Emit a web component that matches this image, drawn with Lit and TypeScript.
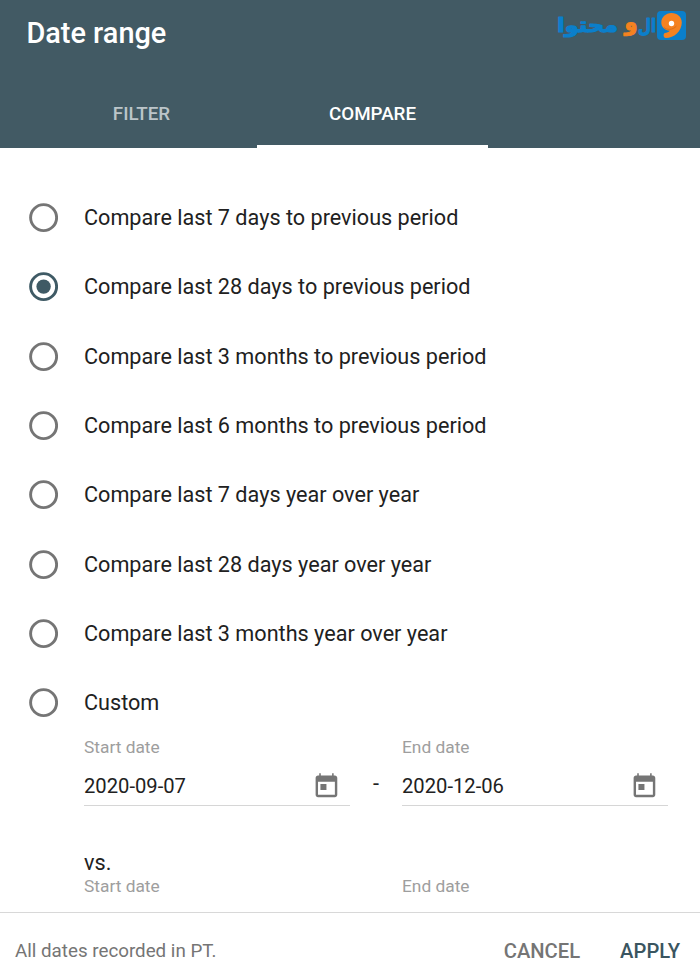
import { LitElement, html, css, svg } from "lit";
import { customElement, property, state } from "lit/decorators.js";
import { classMap } from "lit/directives/class-map.js";

@customElement("brand-logo")
class BrandLogo extends LitElement {
  static styles = css`
    :host { display: block; width: 134px; height: 34px; }
    svg { display: block; }
    text { font-family: "DejaVu Sans", sans-serif; font-weight: 700; stroke-linejoin: round; }
    .blue { fill: #0b7fcb; stroke: #0b7fcb; stroke-width: 1.1; }
    .orange { fill: #f58220; stroke: #f58220; stroke-width: 1; }
  `;
  render() {
    return html`<svg width="134" height="34" viewBox="554 9 134 34">
      <text class="blue" x="557" y="32" font-size="20" textLength="61" lengthAdjust="spacingAndGlyphs">محتوا</text>
      <text class="orange" x="624.500" y="30" font-size="23" textLength="13" lengthAdjust="spacingAndGlyphs">و</text>
      <text class="blue" x="638" y="31.500" font-size="19" textLength="18" lengthAdjust="spacingAndGlyphs">ال</text>
      <rect x="657" y="11" width="29" height="29" rx="4" fill="#0b7fcb" />
      <path fill="#f58220" d="M671.500 13c-5.800 0-10.200 4.300-10.200 9.500 0 4.700 3.700 7.900 8.500 8.200-1.200 1.400-3 2-4.800 2.300-2 .5-1.900 5 .8 5.100 8.300 0 16-7.200 16-15.600 0-5.500-4.500-9.500-10.300-9.500z"/>
      <path fill="none" stroke="#d96f1b" stroke-width="1" d="M664 27.500c2 2.400 8.500 3 12.500-1.500" />
      <circle cx="671.500" cy="23.500" r="2.700" fill="#fff" />
    </svg>`;
  }
}

@customElement("radio-option")
class RadioOption extends LitElement {
  @property() label = "";
  @property({ type: Boolean }) checked = false;
  static styles = css`
    :host { display: flex; align-items: center; height: 69.3px; gap: 26px; cursor: pointer; }
    svg { flex: none; display: block; }
    .ring { fill: none; stroke: #757575; stroke-width: 2.9; }
    .on .ring { stroke: #3f5a65; }
    .dot { fill: #3f5a65; }
    .label { font-size: 21.63px; line-height: 28px; color: #212121; white-space: nowrap; }
  `;
  render() {
    return html`
      <svg class=${classMap({ on: this.checked })} width="30" height="30" viewBox="0 0 30 30">
        <circle class="ring" cx="15.600" cy="14.600" r="13" />
        ${this.checked ? svg`<circle class="dot" cx="15.600" cy="14.600" r="7.200" />` : null}
      </svg>
      <span class="label">${this.label}</span>`;
  }
}

@customElement("date-field")
class DateField extends LitElement {
  @property() label = "";
  @property() value = "";
  static styles = css`
    :host { display: block; width: 266px; }
    .label { font-size: 17.33px; line-height: 20px; color: #9e9e9e; }
    .input { display: flex; align-items: center; justify-content: space-between; height: 36px; padding: 11px 9px 1px 0; border-bottom: 1px solid #d6d6d6; }
    .value { font-size: 20.2px; line-height: 26px; color: #212121; }
    svg { display: block; fill: #757575; }
  `;
  render() {
    return html`
      <div class="label">${this.label}</div>
      ${this.value
        ? html`<div class="input">
            <span class="value">${this.value}</span>
            <svg width="28.900" height="28.900" viewBox="0 0 24 24">
              <path d="M19 3h-1V1h-1.300v2H7.300V1H6v2H5c-1.110 0-2 .9-2 2v14c0 1.100.89 2 2 2h14c1.100 0 2-.9 2-2V5c0-1.100-.9-2-2-2zm0 16H5V8h14v11zM7 10h5v5H7z" />
            </svg>
          </div>`
        : null}`;
  }
}

@customElement("app-root")
class AppRoot extends LitElement {
  @state() private selected = 1;
  private options = [
    "Compare last 7 days to previous period",
    "Compare last 28 days to previous period",
    "Compare last 3 months to previous period",
    "Compare last 6 months to previous period",
    "Compare last 7 days year over year",
    "Compare last 28 days year over year",
    "Compare last 3 months year over year",
    "Custom",
  ];
  static styles = css`
    :host { display: flex; flex-direction: column; width: 700px; height: 980px; overflow: hidden; box-sizing: border-box; background: #fff; font-family: Roboto, sans-serif; }
    .header { flex: none; height: 148px; display: flex; flex-direction: column; justify-content: space-between; background: #425a64; color: #fff; }
    .top { display: flex; justify-content: space-between; padding: 9px 12px 0 26.4px; }
    .title { margin: 0; font-size: 28.9px; line-height: 49px; font-weight: 500; }
    .tabs { display: flex; height: 69px; padding-left: 26px; }
    .tab { width: 231px; box-sizing: border-box; border-bottom: 3px solid transparent; text-align: center; font-size: 18.77px; line-height: 71px; font-weight: 500; color: #bcc5c9; }
    .tab.active { color: #fff; border-bottom-color: #fff; }
    .body { flex: 1; min-height: 0; overflow: hidden; padding: 35.4px 0 0 28px; }
    .dates { display: flex; padding-left: 56px; }
    .first { margin-top: -0.8px; }
    .dash { width: 52px; padding-top: 34px; text-align: center; font-size: 21.66px; line-height: 26px; color: #212121; }
    .vs { padding: 43px 0 0 56px; font-size: 21.66px; line-height: 27px; color: #212121; }
    .second { gap: 52px; }
    .footer { flex: none; height: 68px; display: flex; align-items: center; border-top: 1px solid #d8d8d8; padding: 8px 20px 0 15px; box-sizing: border-box; font-size: 18.77px; color: #757575; }
    .note { flex: 1; }
    .action { font-size: 20.2px; font-weight: 500; margin-left: 40px; }
    .apply { color: #3a5560; }
  `;
  render() {
    return html`
      <div class="header">
        <div class="top"><h1 class="title">Date range</h1><brand-logo></brand-logo></div>
        <div class="tabs"><div class="tab">FILTER</div><div class="tab active">COMPARE</div></div>
      </div>
      <div class="body">
        ${this.options.map((o, i) => html`<radio-option .label=${o} .checked=${i === this.selected} @click=${() => (this.selected = i)}></radio-option>`)}
        <div class="dates first">
          <date-field label="Start date" value="2020-09-07"></date-field>
          <div class="dash">-</div>
          <date-field label="End date" value="2020-12-06"></date-field>
        </div>
        <div class="vs">vs.</div>
        <div class="dates second">
          <date-field label="Start date"></date-field>
          <date-field label="End date"></date-field>
        </div>
      </div>
      <div class="footer">
        <span class="note">All dates recorded in PT.</span>
        <span class="action">CANCEL</span>
        <span class="action apply">APPLY</span>
      </div>`;
  }
}
